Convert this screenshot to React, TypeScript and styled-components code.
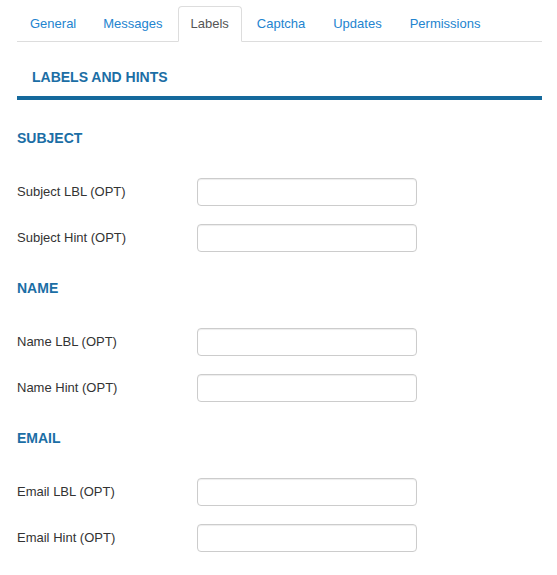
import styled, { createGlobalStyle } from "styled-components";

const GlobalStyle = createGlobalStyle`
  body {
    margin: 0;
    background: #fff;
    font-family: "Liberation Sans", Arial, sans-serif;
    font-size: 13px;
    color: #333;
  }
`;

const Page = styled.div`
  padding: 6px 15px 20px 17px;
`;

const Tabs = styled.ul`
  display: flex;
  margin: 0;
  padding: 0;
  list-style: none;
  border-bottom: 1px solid #ddd;
`;

const Tab = styled.li<{ $active?: boolean }>`
  margin-right: 2px;
  margin-bottom: -1px;
  padding: 8px 12px;
  line-height: 18px;
  border: 1px solid ${(p) => (p.$active ? "#ddd" : "transparent")};
  border-bottom-color: ${(p) => (p.$active ? "#fff" : "transparent")};
  border-radius: 4px 4px 0 0;
  background: ${(p) => (p.$active ? "#fff" : "transparent")};
  color: ${(p) => (p.$active ? "#555" : "#2384cf")};
  cursor: pointer;

  &:first-child {
    margin-right: 1px;
  }
`;

const PanelTitle = styled.h2`
  margin: 25px 0 0;
  padding: 0 15px 9px;
  font-size: 14px;
  line-height: 20px;
  font-weight: bold;
  color: #1b6ea5;
  border-bottom: 4px solid #15699c;
`;

const Fields = styled.div`
  padding-top: 2px;
`;

const Section = styled.section`
  padding-top: 26px;
`;

const SectionTitle = styled.h3`
  margin: 0 0 30px;
  font-size: 14px;
  line-height: 20px;
  font-weight: bold;
  color: #1b6ea5;
`;

const Row = styled.div`
  display: flex;
  align-items: center;
  & + & {
    margin-top: 18px;
  }
`;

const Label = styled.label`
  width: 180px;
  flex-shrink: 0;
  line-height: 18px;
  color: #333;
`;

const TextInput = styled.input`
  box-sizing: border-box;
  width: 220px;
  height: 28px;
  margin: 0;
  padding: 4px 6px;
  border: 1px solid #ccc;
  border-radius: 4px;
  box-shadow: inset 0 1px 1px rgba(0, 0, 0, 0.075);
  font-family: inherit;
  font-size: 13px;
  color: #555;
  background: #fff;
  outline: none;
`;

const tabs = ["General", "Messages", "Labels", "Captcha", "Updates", "Permissions"];

const sections = [
  { title: "SUBJECT", name: "Subject" },
  { title: "NAME", name: "Name" },
  { title: "EMAIL", name: "Email" },
];

export default function App() {
  return (
    <>
      <GlobalStyle />
      <Page>
        <Tabs>
          {tabs.map((t) => (
            <Tab key={t} $active={t === "Labels"}>
              {t}
            </Tab>
          ))}
        </Tabs>

        <PanelTitle>LABELS AND HINTS</PanelTitle>

        <Fields>
          {sections.map((s) => (
            <Section key={s.title}>
              <SectionTitle>{s.title}</SectionTitle>
              <Row>
                <Label>{s.name} LBL (OPT)</Label>
                <TextInput type="text" />
              </Row>
              <Row>
                <Label>{s.name} Hint (OPT)</Label>
                <TextInput type="text" />
              </Row>
            </Section>
          ))}
        </Fields>
      </Page>
    </>
  );
}
